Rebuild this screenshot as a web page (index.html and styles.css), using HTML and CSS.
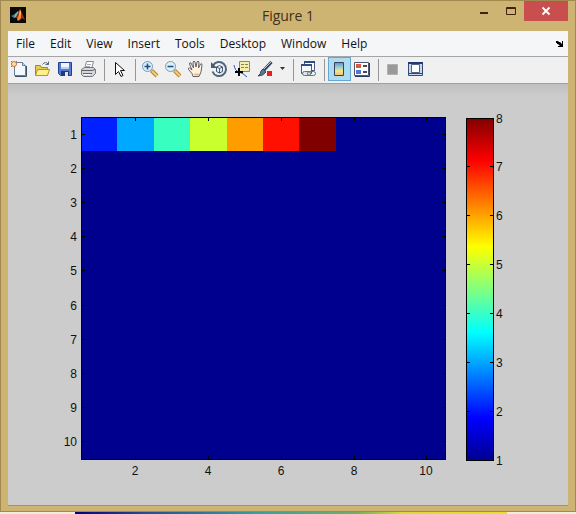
FILE: index.html
```html
<!DOCTYPE html>
<html lang="en">
<head>
<meta charset="utf-8">
<title>Figure 1</title>
<link rel="stylesheet" href="styles.css">
</head>
<body>
<main class="window">
  <header class="titlebar">
    <svg class="logo" viewBox="0 0 16 16" aria-hidden="true">
      <path fill="#080808" d="M0 0h16v16H0z"/>
      <path fill="#3b7d91" d="M1 9l4-2 3-2-2 5-2 1z"/>
      <path fill="#75b5bd" d="M5 7l3-3 1 1-3 5-2 1z"/>
      <path fill="#a82b12" d="M4 11l2-1 4-8 2 4 3 7-3-2-3 3-2-3z"/>
      <path fill="#f58b28" d="M10 2l1 3v6l-3 3-1-2 2-4z"/>
      <path fill="#ffd261" d="M10 3l1 3-2 4z"/>
    </svg>
    <h1 class="title">Figure 1</h1>
    <div class="controls">
      <button class="control" aria-label="Minimize"><svg viewBox="0 0 10 10"><path fill="#42200f" d="M1 6h8v2H1z"/></svg></button>
      <button class="control" aria-label="Maximize"><svg viewBox="0 0 10 10"><path fill="none" stroke="#42200f" d="M.5 1.5h9v7h-9zM0 2.5h10"/></svg></button>
      <button class="control close" aria-label="Close"><svg viewBox="0 0 10 10"><path fill="none" stroke="#fff" stroke-width="1.8" d="M1.500 1.500l7 7m0-7l-7 7"/></svg></button>
    </div>
  </header>
  <nav class="menubar">
    <button class="menu">File</button><button class="menu">Edit</button><button class="menu">View</button><button class="menu">Insert</button><button class="menu">Tools</button><button class="menu">Desktop</button><button class="menu">Window</button><button class="menu">Help</button>
    <button class="dock" aria-label="Dock figure"><svg viewBox="0 0 8 8"><path fill="#000" d="M0 1h2l1 1h1l2 2V1h1v6H2V6h2L2 4H1V3H0z"/></svg></button>
  </nav>
  <div class="toolbar" role="toolbar">
    <button class="tool" aria-label="New figure"><svg viewBox="0 0 18 18"><path fill="#f3f8fc" stroke="#647d9b" d="M4.500 2.500h8l3 3v10h-11z"/><path fill="#cbdcea" stroke="#647d9b" d="M12.500 2.500v3h3"/><path stroke="#3c536d" d="M5 16.500h11.500V6"/><circle cx="4" cy="4" r="2.500" fill="#ffe2a0" stroke="#d96831"/><path stroke="#d96831" d="M1 1l1 1m4 0l1-1M1 7l1-1"/></svg></button>
    <button class="tool" aria-label="Open file"><svg viewBox="0 0 18 18"><path fill="#e9cc56" stroke="#a98524" d="M2.500 15.500v-10h5l1 2h6v8z"/><path fill="#fff08a" stroke="#b79427" d="M2.500 15.500l2-6h12l-2 6z"/><path fill="none" stroke="#526a80" d="M9.500 4.500q3-4 6 0m0-3v3h-3"/></svg></button>
    <button class="tool" aria-label="Save"><svg viewBox="0 0 18 18"><path fill="#557bd0" stroke="#243e91" d="M2.500 2.500h13v13h-11l-2-2z"/><path fill="#eef4fc" d="M5 3h8v6H5z"/><path fill="#c0cee7" d="M5 7h8v2H5z"/><path fill="#24397c" d="M5 11h8v5H5z"/><path fill="#dfe7f0" d="M9 12h3v4H9z"/></svg></button>
    <button class="tool" aria-label="Print"><svg viewBox="0 0 18 18"><path fill="#fff" stroke="#848994" d="M5.500 9l2-7.500h7L12.500 9z"/><path stroke="#a1a6b0" d="M8 4.500h4m-5 2h4"/><path fill="#d5d6da" stroke="#72757d" d="M2.500 9.500l3-2h9l2 2v4l-3 3h-9l-2-2z"/><path fill="none" stroke="#5f626a" d="M3 10.500h10l3-1M4 13.500h9"/><path fill="#fff" d="M5 14h6v1H5z"/></svg></button>
    <span class="sep"></span>
    <button class="tool" aria-label="Edit plot"><svg viewBox="0 0 18 18"><path fill="#fff" stroke="#111" d="M5.500 2.500v12l3-3 2.500 5 2-1-2.500-5h4z"/></svg></button>
    <span class="sep"></span>
    <button class="tool" aria-label="Zoom in"><svg viewBox="0 0 18 18"><path stroke="#b78636" stroke-width="4" d="M10.500 10.500l5.500 5.500"/><path stroke="#f5ce77" stroke-width="2" d="M11 11l5 5"/><circle cx="6.500" cy="6.500" r="5" fill="#d9f1fa" stroke="#7b9bb3"/><path stroke="#214b83" stroke-width="1.500" d="M3.500 6.500h6m-3-3v6"/></svg></button>
    <button class="tool" aria-label="Zoom out"><svg viewBox="0 0 18 18"><path stroke="#b78636" stroke-width="4" d="M10.500 10.500l5.500 5.500"/><path stroke="#f5ce77" stroke-width="2" d="M11 11l5 5"/><circle cx="6.500" cy="6.500" r="5" fill="#d9f1fa" stroke="#7b9bb3"/><path stroke="#214b83" stroke-width="1.500" d="M3.500 6.500h6"/></svg></button>
    <button class="tool" aria-label="Pan"><svg viewBox="0 0 18 18"><path fill="#fff3df" stroke="#66616a" d="M6 16.500l-1-3-3.500-4q-.5-2 1-1.500L5 10 2.500 4q0-2 1.500-1l2.500 5-.5-6q1-2 2 0l1 5 1-5q1-2 2 0l-.5 6 2-4q1.500-1 1.500 1l-1 7-2 4.500z"/><path stroke="#e9bd88" stroke-width="2" d="M7 14.500h5"/></svg></button>
    <button class="tool" aria-label="Rotate 3D"><svg viewBox="0 0 18 18"><path fill="none" stroke="#52657e" stroke-width="2" d="M3 5.500a7 7 0 1 1-.500 6"/><path fill="#465a73" d="M1 2v6h6z"/><path fill="#e5edf5" stroke="#3f5976" d="M6.500 7l3-1.500 3 1.500v4.500l-3 1.500-3-1.500z"/><path fill="none" stroke="#3f5976" d="M6.500 7l3 1.500 3-1.500m-3 1.500V13"/></svg></button>
    <button class="tool" aria-label="Data cursor"><svg viewBox="0 0 18 18"><path fill="#f4efae" stroke="#8e8c54" d="M6.500 1.500h10v10h-10z"/><path stroke="#89854e" d="M8 4.500h3m1 0h3m-7 3h3m1 0h3"/><path fill="none" stroke="#3457a8" d="M1 5q1 6 5 7t8 5"/><path stroke="#000" stroke-width="2" d="M2 12h8M6 8v8"/></svg></button>
    <button class="tool" aria-label="Brush data"><svg viewBox="0 0 18 18"><path stroke="#30435e" stroke-width="3" d="M15.500 2L8 10"/><path stroke="#b5cbe0" d="M15 2L8 9"/><path fill="#65778b" stroke="#33455b" d="M7 9l3 3q-3 4-8 4 3-2 3-5z"/><path fill="#ef1c16" d="M11 11h5v5h-5z"/></svg></button>
    <button class="caret" aria-label="Brush colour"><svg viewBox="0 0 6 4"><path fill="#333" d="M0 0h5L2.500 3z"/></svg></button>
    <span class="sep"></span>
    <button class="tool" aria-label="Link plot"><svg viewBox="0 0 18 18"><path fill="#fff" stroke="#405a8b" d="M5.500 1.500h10v9h-10z"/><path fill="#f5f8fb" stroke="#405a8b" d="M2.500 4.500h10v9h-10z"/><path stroke="#304b85" stroke-width="2" d="M5 2h11M2 5h11"/><rect x="3.500" y="11.500" width="8" height="4" rx="2" fill="#dce4e8" stroke="#60727c"/><rect x="8.500" y="11.500" width="8" height="4" rx="2" fill="none" stroke="#60727c"/></svg></button>
    <span class="sep"></span>
    <button class="tool pressed" aria-label="Insert colorbar" aria-pressed="true"><svg viewBox="0 0 18 18"><defs><linearGradient id="mini" x2="0" y2="1"><stop stop-color="#718bbb"/><stop offset=".4" stop-color="#9fd3d6"/><stop offset=".65" stop-color="#f6e781"/><stop offset="1" stop-color="#efbd72"/></linearGradient></defs><path fill="url(#mini)" stroke="#344260" d="M4.500 2.500h9v13h-9z"/></svg></button>
    <button class="tool" aria-label="Insert legend"><svg viewBox="0 0 18 18"><path fill="#fff" stroke="#4a5871" d="M1.500 2.500h14v13h-14z"/><path fill="none" stroke="#2c3c60" d="M2 16.500h14.500V3"/><path fill="#d95840" d="M3 4h5v4H3z"/><path fill="#5577cf" d="M3 10h5v4H3z"/><path stroke="#111" stroke-width="1.500" d="M10 6h4m-4 6h4"/></svg></button>
    <span class="sep"></span>
    <button class="tool" aria-label="Hide plot tools"><svg viewBox="0 0 18 18"><path fill="#999" stroke="#b0b0b0" d="M3.500 4.500h10v10h-10z"/></svg></button>
    <button class="tool" aria-label="Show plot tools"><svg viewBox="0 0 18 18"><path fill="#cbd7e6" stroke="#354a74" d="M1.500 2.500h14v13h-14z"/><path fill="#fff" stroke="#4d6289" d="M4.500 4.500h8v8h-8z"/><path stroke="#25396c" stroke-width="2" d="M1 3h15"/><path stroke="#354a74" d="M2 13.500h13"/></svg></button>
  </div>
  <section class="figure">
    <svg class="plot" viewBox="8 84 560 421" role="img" aria-label="Heat map with colour bar">
      <defs>
        <linearGradient id="jet" x2="0" y2="1">
          <stop stop-color="#800000"/><stop offset=".125" stop-color="#f00"/><stop offset=".375" stop-color="#ff0"/><stop offset=".5" stop-color="#80ff80"/><stop offset=".625" stop-color="#0ff"/><stop offset=".875" stop-color="#00f"/><stop offset="1" stop-color="#00008f"/>
        </linearGradient>
      </defs>
      <path fill="#00008f" d="M81 117h365v343H81z"/>
      <g shape-rendering="crispEdges">
        <path fill="#0020ff" d="M81 117h36v34H81z"/><path fill="#00a8ff" d="M117 117h37v34h-37z"/><path fill="#38ffbf" d="M154 117h36v34h-36z"/><path fill="#c8ff2c" d="M190 117h37v34h-37z"/><path fill="#ff9c00" d="M227 117h36v34h-36z"/><path fill="#ff1000" d="M263 117h36v34h-36z"/><path fill="#800000" d="M299 117h37v34h-37z"/>
      </g>
      <path class="axis" d="M81.500 117.500h364v342h-364zM135.500 118v3m73-3v3m73-3v3m73-3v3m72-3v3M135.500 459v-3m73 3v-3m73 3v-3m73 3v-3m72 3v-3M82 134.500h3m-3 34h3m-3 34h3m-3 34h3m-3 34h3m-3 35h3m-3 34h3m-3 34h3m-3 34h3m-3 34h3M445 134.500h-3m3 34h-3m3 34h-3m3 34h-3m3 34h-3m3 35h-3m3 34h-3m3 34h-3m3 34h-3m3 34h-3"/>
      <path fill="url(#jet)" d="M466 118h28v343h-28z"/>
      <path class="axis" d="M466.500 118.500h27v342h-27zM467 166.500h3m-3 49h3m-3 49h3m-3 49h3m-3 49h3m-3 49h3M493 166.500h-3m3 49h-3m3 49h-3m3 49h-3m3 49h-3m3 49h-3"/>
      <g class="label end"><text x="77" y="139">1</text><text x="77" y="173">2</text><text x="77" y="207">3</text><text x="77" y="241">4</text><text x="77" y="275">5</text><text x="77" y="310">6</text><text x="77" y="344">7</text><text x="77" y="378">8</text><text x="77" y="412">9</text><text x="77" y="446">10</text></g>
      <g class="label middle"><text x="135" y="475">2</text><text x="208" y="475">4</text><text x="281" y="475">6</text><text x="354" y="475">8</text><text x="426" y="475">10</text></g>
      <g class="label"><text x="496" y="123">8</text><text x="496" y="171">7</text><text x="496" y="220">6</text><text x="496" y="269">5</text><text x="496" y="318">4</text><text x="496" y="367">3</text><text x="496" y="416">2</text><text x="496" y="465">1</text></g>
    </svg>
  </section>
</main>
<div class="backdrop"></div>
</body>
</html>
```
FILE: styles.css
```css
* { box-sizing: border-box; }

body {
  margin: 0;
  min-height: 100vh;
  display: flex;
  flex-direction: column;
  font-family: "Open Sans", "Noto Sans", sans-serif;
  background: #f1edda;
}

button {
  margin: 0;
  padding: 0;
  border: 0;
  background: none;
  color: inherit;
  font: inherit;
}

svg { display: block; }

.window {
  flex: 1;
  display: flex;
  flex-direction: column;
  padding: 0 7px 5px;
  border: 1px solid #a08a50;
  background: #ceb473;
}

.titlebar {
  display: grid;
  grid-template-columns: 1fr auto 1fr;
  height: 30px;
}

.logo {
  width: 16px;
  height: 16px;
  margin: 6px 2px;
}

.title {
  margin: 0;
  font-size: 14px;
  font-weight: 400;
  line-height: 29px;
  color: #3f2f22;
}

.controls {
  display: flex;
  justify-content: flex-end;
}

.control {
  display: flex;
  align-items: center;
  justify-content: center;
  width: 27px;
  height: 20px;
}

.control svg {
  width: 10px;
  height: 10px;
}

.close {
  width: 44px;
  background: #c94f4f;
}

.menubar {
  display: flex;
  align-items: center;
  gap: 15px;
  height: 26px;
  padding: 0 4px 0 8px;
  border-bottom: 1px solid #a5a5a8;
  background: #f5f6f7;
  font-size: 12px;
  line-height: 16px;
  color: #111;
}

.dock { margin-left: auto; }

.dock svg {
  width: 8px;
  height: 8px;
}

.toolbar {
  display: flex;
  height: 27px;
  border-bottom: 1px solid #a0a0a2;
  background: #f0f0f0;
}

.tool {
  display: flex;
  align-items: center;
  justify-content: center;
  width: 23px;
  height: 24px;
  padding-right: 1px;
}

.tool svg {
  flex: none;
  width: 18px;
  height: 18px;
  fill: none;
}

.pressed {
  border: 1px solid #65a7d2;
  background: #addcf0;
}

.caret {
  display: flex;
  align-items: center;
  justify-content: center;
  width: 12px;
  height: 24px;
}

.caret svg {
  width: 6px;
  height: 4px;
}

.sep {
  width: 8px;
  height: 22px;
  margin-top: 2px;
  background: linear-gradient(#969696, #969696) center / 1px 100% no-repeat;
}

.figure {
  flex: 1;
  background: linear-gradient(#c0c0c0, #ccc 12px);
  border-bottom: 1px solid #a99262;
}

.plot {
  width: 100%;
  height: auto;
}

.axis {
  fill: none;
  stroke: #000;
}

.label {
  font-family: "Liberation Sans", Arial, sans-serif;
  font-size: 12px;
  fill: #111;
}

.end { text-anchor: end; }

.middle { text-anchor: middle; }

.backdrop {
  height: 2px;
  background: linear-gradient(90deg, #f1edda 13%, #000080 13%, #204c90 25%, #36a0a0 45%, #70b060 62%, #d8dc38 70%, #e5df30 88%, #f1edda 88%);
}
```
